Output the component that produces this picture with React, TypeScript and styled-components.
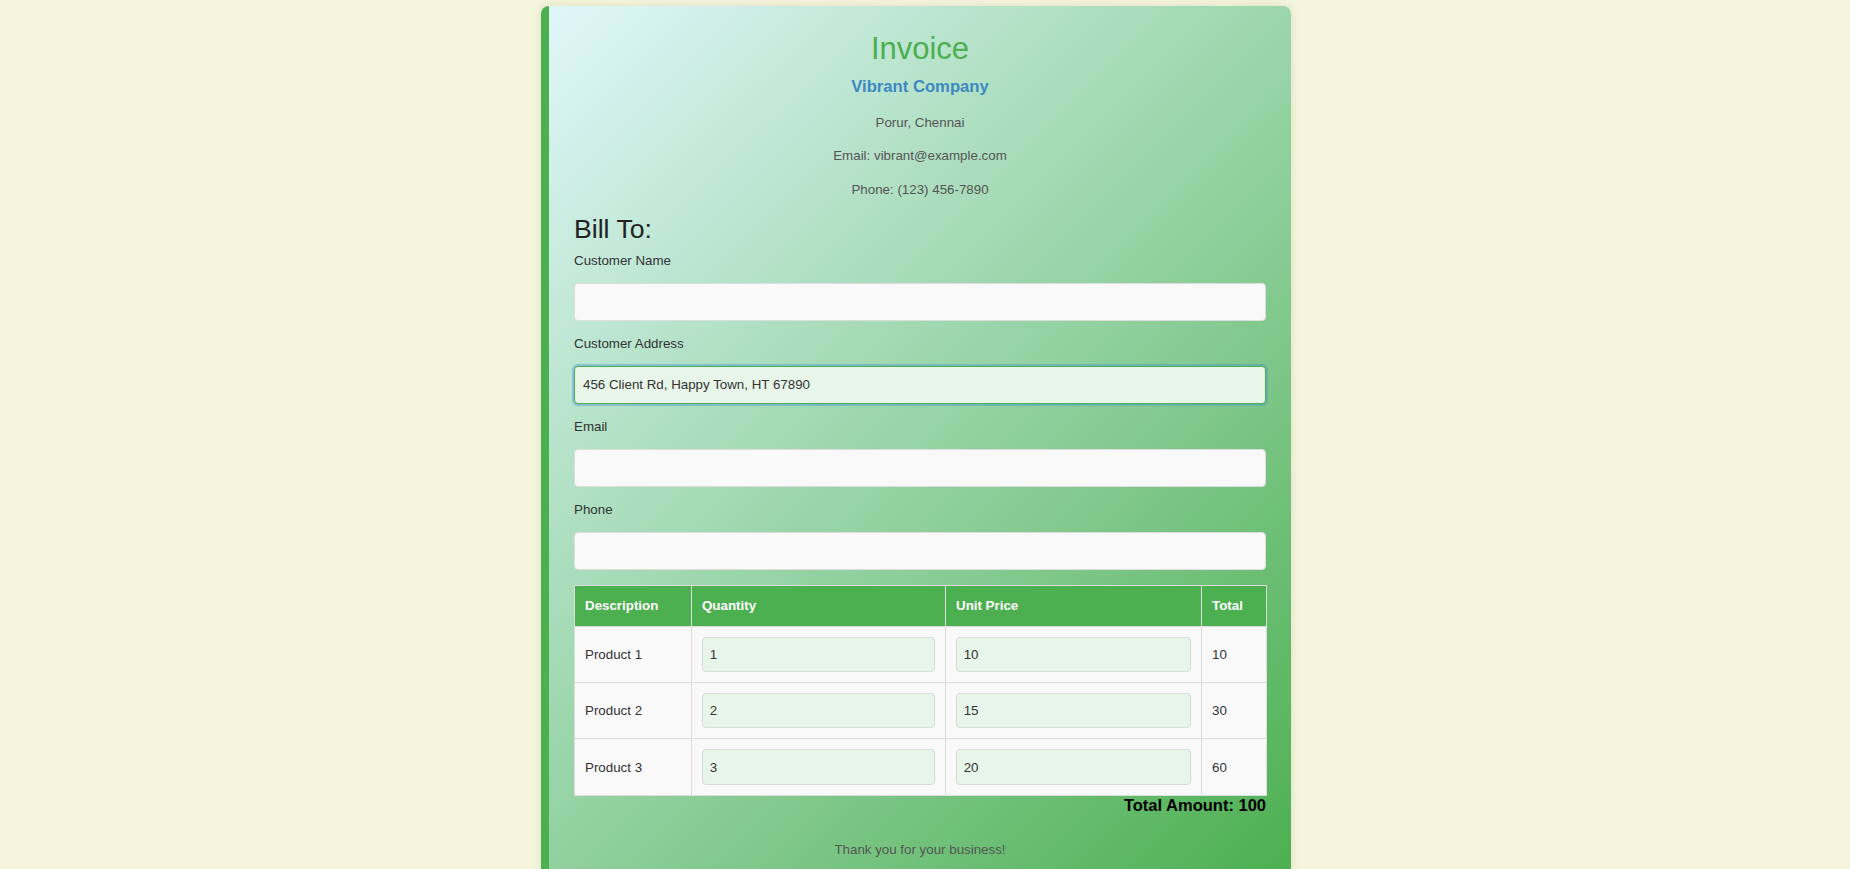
import React, { useState } from "react";
import styled, { createGlobalStyle, css } from "styled-components";

const GlobalStyle = createGlobalStyle`
  html, body {
    margin: 0;
    padding: 0;
    background: #f5f5dc;
    font-family: "Liberation Sans", Arial, sans-serif;
  }
  * { box-sizing: border-box; }
`;

const Page = styled.div`
  min-height: 100vh;
  display: flex;
  justify-content: center;
  align-items: flex-start;
  padding: 6px 18px 20px 0;
  background: #f5f5dc;
`;

const Card = styled.div`
  width: 750px;
  padding: 25px 25px 26px;
  border-left: 8px solid #4caf50;
  border-radius: 8px;
  background: linear-gradient(135deg, #e0f7fa 0%, #4caf50 100%);
  box-shadow: 0 0 10px rgba(0, 0, 0, 0.1);
  color: #333;
`;

const Header = styled.header`
  display: flex;
  flex-direction: column;
  align-items: center;
  text-align: center;
`;

const Title = styled.h1`
  margin: 0 0 10px;
  font-size: 31px;
  line-height: 36px;
  font-weight: 400;
  color: #4caf50;
`;

const Company = styled.h2`
  margin: 0 0 15.7px;
  font-size: 16.67px;
  line-height: 20px;
  font-weight: 700;
  color: #3d89c2;
`;

const InfoList = styled.div`
  display: flex;
  flex-direction: column;
  gap: 13.5px;
`;

const Info = styled.p`
  margin: 0;
  font-size: 13.33px;
  line-height: 20px;
  color: #555;
`;

const SectionTitle = styled.h2`
  margin: 14px 0 9px;
  font-size: 26.67px;
  line-height: 30px;
  font-weight: 400;
  color: #222;
`;

const Field = styled.div`
  display: flex;
  flex-direction: column;
  margin-bottom: 15px;
`;

const Label = styled.label`
  font-size: 13.33px;
  line-height: 16px;
  color: #333;
  margin-bottom: 14px;
`;

const TextInput = styled.input<{ $focused?: boolean }>`
  width: 100%;
  height: 38px;
  padding: 10px 8px;
  font-family: "Liberation Sans", Arial, sans-serif;
  font-size: 13.33px;
  color: #333;
  background: #f9f9f9;
  border: 1px solid #ddd;
  border-radius: 4px;
  outline: none;
  ${(p) =>
    p.$focused &&
    css`
      background: #e8f5e9;
      border-color: #4caf50;
      box-shadow: 0 0 0 2px rgba(70, 150, 210, 0.45);
    `}
`;

const Table = styled.table`
  width: 100%;
  margin-top: 1px;
  border-collapse: collapse;
  table-layout: fixed;
  font-size: 13.33px;
`;

const HeadCell = styled.th`
  padding: 12.5px 10px;
  text-align: left;
  font-weight: 700;
  line-height: 15px;
  color: #fff;
  background: #4caf50;
  border: 1px solid #ddd;
`;

const Cell = styled.td`
  padding: 10px;
  line-height: 15px;
  color: #333;
  background: #f9f9f9;
  border: 1px solid #ddd;
`;

const CellInput = styled.input`
  width: 100%;
  height: 35.4px;
  padding: 8.33px 6.67px;
  font-family: "Liberation Sans", Arial, sans-serif;
  font-size: 13.33px;
  color: #333;
  background: #e8f5e9;
  border: 1px solid #d6dcd7;
  border-radius: 4px;
  outline: none;
`;

const TotalAmount = styled.div`
  text-align: right;
  font-size: 16.5px;
  line-height: 18px;
  font-weight: 700;
  color: #000;
`;

const Footer = styled.p`
  margin: 28px 0 0;
  text-align: center;
  font-size: 13.33px;
  line-height: 15px;
  color: #555;
`;

type Item = { description: string; quantity: number; price: number };

export default function App() {
  const [address, setAddress] = useState("456 Client Rd, Happy Town, HT 67890");
  const [items, setItems] = useState<Item[]>([
    { description: "Product 1", quantity: 1, price: 10 },
    { description: "Product 2", quantity: 2, price: 15 },
    { description: "Product 3", quantity: 3, price: 20 },
  ]);

  const update = (i: number, key: "quantity" | "price", value: string) => {
    setItems((prev) =>
      prev.map((it, idx) => (idx === i ? { ...it, [key]: Number(value) || 0 } : it))
    );
  };

  const total = items.reduce((s, it) => s + it.quantity * it.price, 0);

  return (
    <>
      <GlobalStyle />
      <Page>
        <Card>
          <Header>
            <Title>Invoice</Title>
            <Company>Vibrant Company</Company>
            <InfoList>
              <Info>Porur, Chennai</Info>
              <Info>Email: vibrant@example.com</Info>
              <Info>Phone: (123) 456-7890</Info>
            </InfoList>
          </Header>

          <SectionTitle>Bill To:</SectionTitle>
          <Field>
            <Label>Customer Name</Label>
            <TextInput type="text" />
          </Field>
          <Field>
            <Label>Customer Address</Label>
            <TextInput
              type="text"
              $focused
              value={address}
              onChange={(e) => setAddress(e.target.value)}
            />
          </Field>
          <Field>
            <Label>Email</Label>
            <TextInput type="email" />
          </Field>
          <Field>
            <Label>Phone</Label>
            <TextInput type="tel" />
          </Field>

          <Table>
            <colgroup>
              <col style={{ width: "117px" }} />
              <col style={{ width: "254px" }} />
              <col style={{ width: "256px" }} />
              <col style={{ width: "65px" }} />
            </colgroup>
            <thead>
              <tr>
                <HeadCell>Description</HeadCell>
                <HeadCell>Quantity</HeadCell>
                <HeadCell>Unit Price</HeadCell>
                <HeadCell>Total</HeadCell>
              </tr>
            </thead>
            <tbody>
              {items.map((it, i) => (
                <tr key={it.description}>
                  <Cell>{it.description}</Cell>
                  <Cell>
                    <CellInput
                      type="text"
                      value={String(it.quantity)}
                      onChange={(e) => update(i, "quantity", e.target.value)}
                    />
                  </Cell>
                  <Cell>
                    <CellInput
                      type="text"
                      value={String(it.price)}
                      onChange={(e) => update(i, "price", e.target.value)}
                    />
                  </Cell>
                  <Cell>{it.quantity * it.price}</Cell>
                </tr>
              ))}
            </tbody>
          </Table>
          <TotalAmount>Total Amount: {total}</TotalAmount>
          <Footer>Thank you for your business!</Footer>
        </Card>
      </Page>
    </>
  );
}
